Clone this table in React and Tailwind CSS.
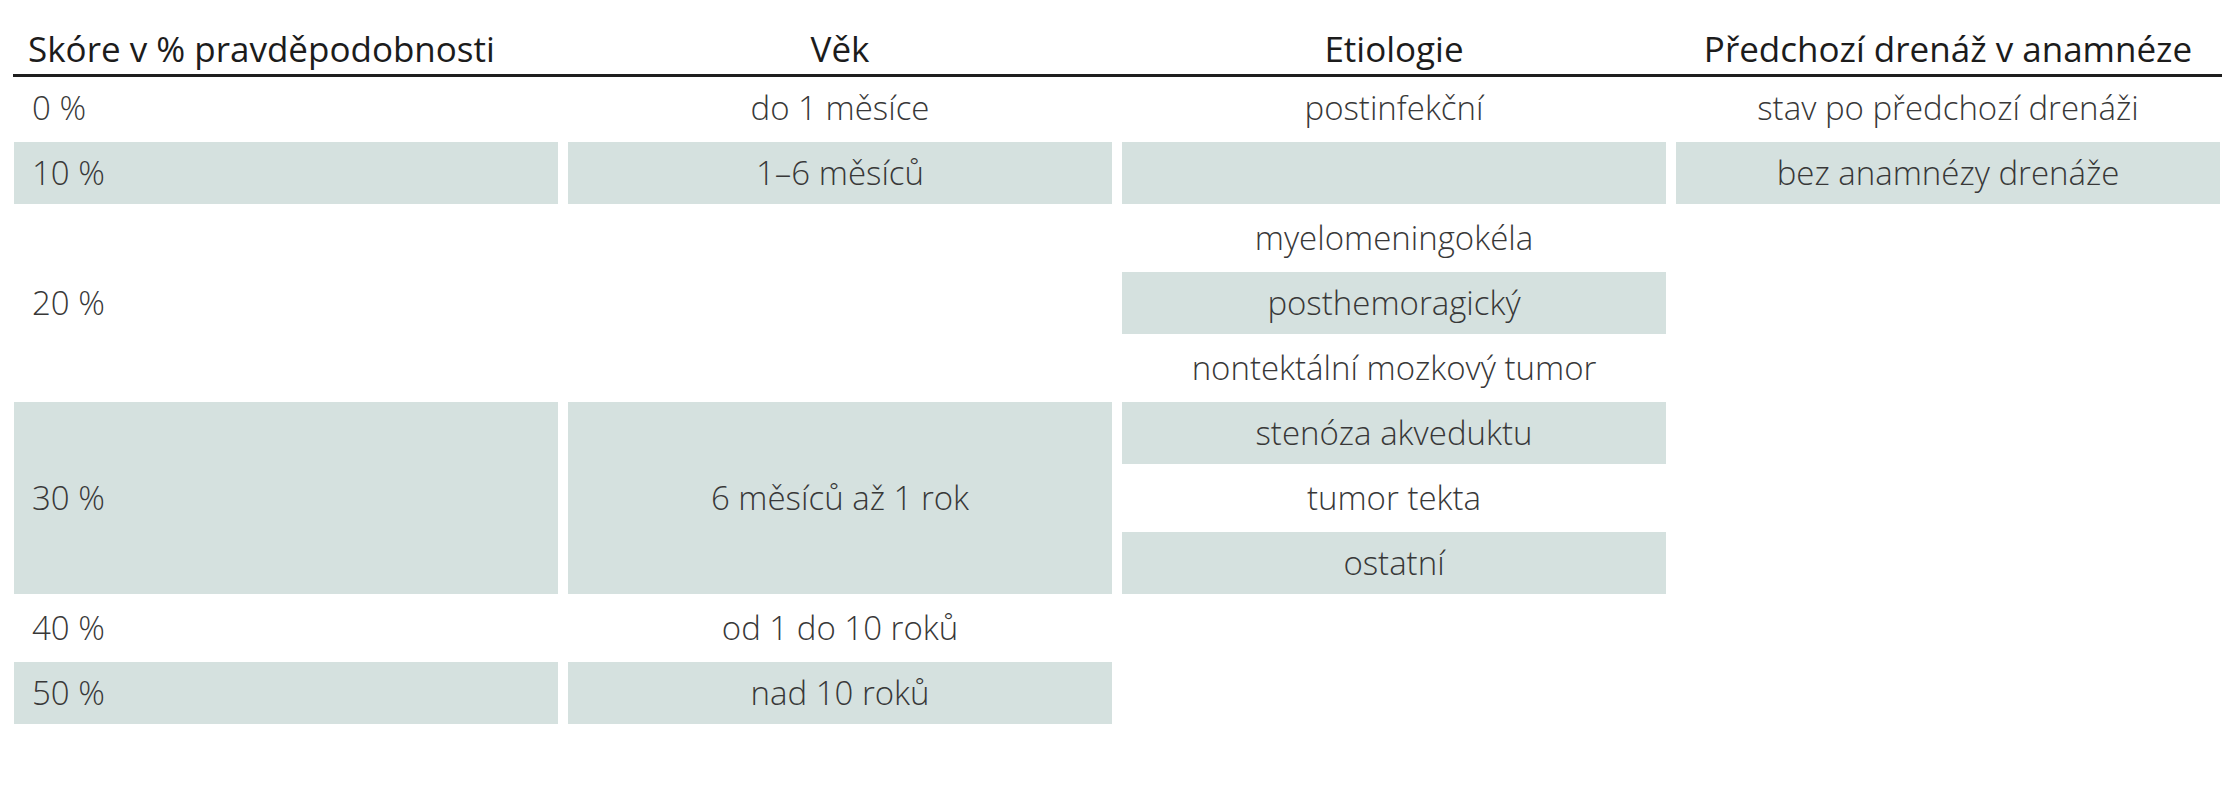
const band = "bg-[#d5e1df]";

function Cell({ className = "", shaded, left, children }) {
    return (
        <div
            className={`flex items-center ${left ? "justify-start pl-[18px]" : "justify-center"} ${shaded ? band : ""} ${className}`}
        >
            {children}
        </div>
    );
}

export default function App() {
    return (
        <div className="w-[2237px] h-[800px] bg-white font-['Open_Sans',_'Liberation_Sans',_sans-serif]">
            <div className="ml-[14px] w-[2206px]">
                {/* header */}
                <div className="h-[74px] grid grid-cols-4 gap-x-[10px] items-end pb-[5px] text-[35px] leading-[40px] text-[#1c1c1c]">
                    <div className="pl-[14px] whitespace-nowrap">Skóre v % pravděpodobnosti</div>
                    <div className="text-center">Věk</div>
                    <div className="text-center">Etiologie</div>
                    <div className="text-center whitespace-nowrap">Předchozí drenáž v anamnéze</div>
                </div>
                <div className="h-[3px] -ml-[1px] w-[2209px] bg-[#1e1e1e]" />

                {/* body */}
                <div className="grid grid-cols-4 gap-x-[10px] gap-y-[3px] auto-rows-[62px] text-[33px] font-light text-[#383838] whitespace-nowrap">
                    {/* 0 % */}
                    <Cell left className="col-start-1 row-start-1">0 %</Cell>
                    <Cell className="col-start-2 row-start-1">do 1 měsíce</Cell>
                    <Cell className="col-start-3 row-start-1">postinfekční</Cell>
                    <Cell className="col-start-4 row-start-1">stav po předchozí drenáži</Cell>

                    {/* 10 % */}
                    <Cell left shaded className="col-start-1 row-start-2">10 %</Cell>
                    <Cell shaded className="col-start-2 row-start-2">1–6 měsíců</Cell>
                    <Cell shaded className="col-start-3 row-start-2" />
                    <Cell shaded className="col-start-4 row-start-2">bez anamnézy drenáže</Cell>

                    {/* 20 % */}
                    <Cell left className="col-start-1 row-start-3 row-span-3">20 %</Cell>
                    <Cell className="col-start-3 row-start-3">myelomeningokéla</Cell>
                    <Cell shaded className="col-start-3 row-start-4">posthemoragický</Cell>
                    <Cell className="col-start-3 row-start-5">nontektální mozkový tumor</Cell>

                    {/* 30 % */}
                    <Cell left shaded className="col-start-1 row-start-6 row-span-3">30 %</Cell>
                    <Cell shaded className="col-start-2 row-start-6 row-span-3">6 měsíců až 1 rok</Cell>
                    <Cell shaded className="col-start-3 row-start-6">stenóza akveduktu</Cell>
                    <Cell className="col-start-3 row-start-7">tumor tekta</Cell>
                    <Cell shaded className="col-start-3 row-start-8">ostatní</Cell>

                    {/* 40 % / 50 % */}
                    <Cell left className="col-start-1 row-start-9">40 %</Cell>
                    <Cell className="col-start-2 row-start-9">od 1 do 10 roků</Cell>
                    <Cell left shaded className="col-start-1 row-start-10">50 %</Cell>
                    <Cell shaded className="col-start-2 row-start-10">nad 10 roků</Cell>
                </div>
            </div>
        </div>
    );
}
